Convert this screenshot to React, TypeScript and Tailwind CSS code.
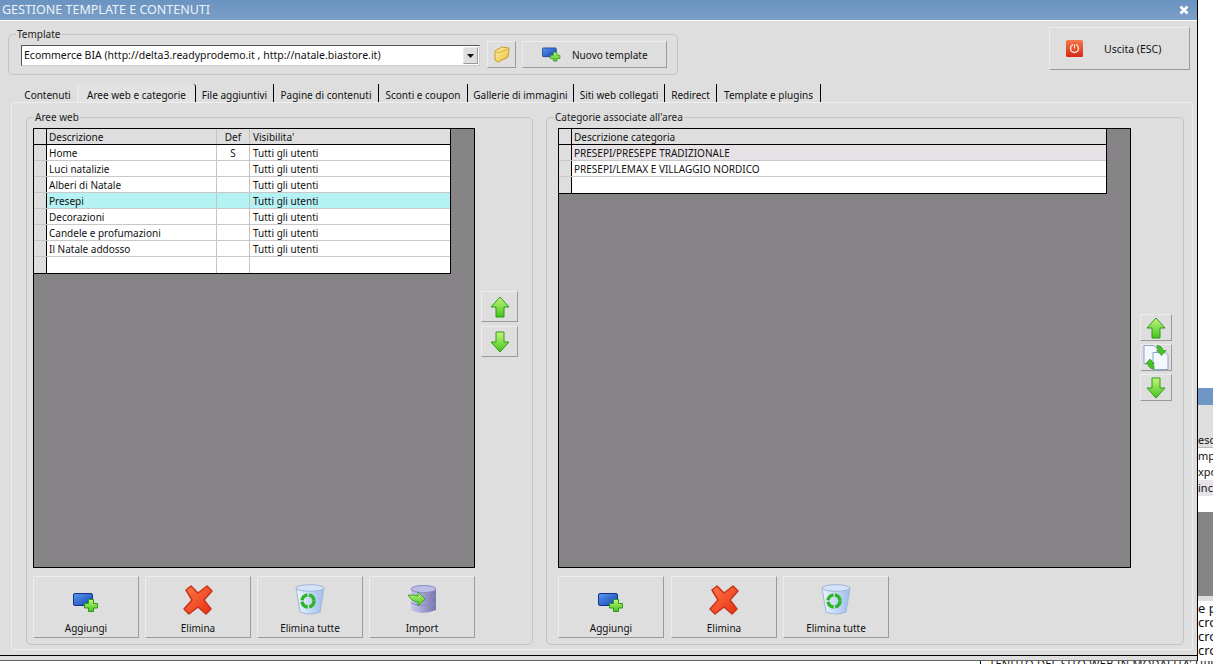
const iconGradients = (
  <defs>
    <linearGradient id="blueRect" x1="0" y1="0" x2="1" y2="1">
      <stop offset="0" stopColor="#5b9bf0" />
      <stop offset="1" stopColor="#1240b0" />
    </linearGradient>
    <linearGradient id="greenFill" x1="0" y1="0" x2="0" y2="1">
      <stop offset="0" stopColor="#c4f57c" />
      <stop offset="1" stopColor="#45c41e" />
    </linearGradient>
    <linearGradient id="redFill" x1="0" y1="0" x2="1" y2="1">
      <stop offset="0" stopColor="#ff7a4a" />
      <stop offset="1" stopColor="#e62e12" />
    </linearGradient>
    <linearGradient id="binFill" x1="0" y1="0" x2="1" y2="0">
      <stop offset="0" stopColor="#eef5ff" />
      <stop offset="1" stopColor="#9dbdea" />
    </linearGradient>
    <linearGradient id="dbFill" x1="0" y1="0" x2="1" y2="0">
      <stop offset="0" stopColor="#c9c9ee" />
      <stop offset="1" stopColor="#7676b0" />
    </linearGradient>
    <linearGradient id="folderFill" x1="0" y1="0" x2="1" y2="1">
      <stop offset="0" stopColor="#fff3a8" />
      <stop offset="1" stopColor="#e8bd3c" />
    </linearGradient>
    <linearGradient id="powerFill" x1="0" y1="0" x2="0" y2="1">
      <stop offset="0" stopColor="#f47a4e" />
      <stop offset="1" stopColor="#d62a14" />
    </linearGradient>
  </defs>
);

function AddIcon({ width = 26, height = 19 }: { width?: number; height?: number }) {
  return (
    <svg width={width} height={height} viewBox="0 0 26 19">
      {iconGradients}
      <rect x="0.5" y="0.5" width="19" height="12" rx="1.5" fill="url(#blueRect)" stroke="#12308c" />
      <path d="M15.5 6.5h5v4h4v4.5h-4v3.5h-5V15h-4v-4.5h4z" fill="url(#greenFill)" stroke="#2d9a18" />
    </svg>
  );
}

function DeleteIcon() {
  return (
    <svg width="30" height="30" viewBox="0 0 30 30">
      {iconGradients}
      <path
        d="M8 1 L15 8 L24 1 L29 6 L21 15 L28 24 L23 29 L15 22 L6 29 L1 24 L9 15 L3 5 Z"
        fill="url(#redFill)"
        stroke="#c8321a"
        strokeWidth="1.5"
        strokeLinejoin="round"
      />
    </svg>
  );
}

function BinIcon() {
  return (
    <svg width="30" height="31" viewBox="0 0 30 31">
      {iconGradients}
      <path d="M1 4 L5 28 Q15 32 25 28 L29 4 Z" fill="url(#binFill)" stroke="#9fb6d8" />
      <ellipse cx="15" cy="4" rx="14" ry="3.3" fill="#d4e3f8" stroke="#9fb6d8" />
      <circle cx="13" cy="17" r="6" fill="none" stroke="#2fb52a" strokeWidth="3.5" strokeDasharray="8 1.5" />
    </svg>
  );
}

function ImportIcon() {
  return (
    <svg width="29" height="29" viewBox="0 0 29 29">
      {iconGradients}
      <path d="M3 4 V25 Q14 31 28 25 V4 Z" fill="url(#dbFill)" />
      <ellipse cx="15.5" cy="4" rx="12.5" ry="3.5" fill="#bdbde8" stroke="#8a8ac0" />
      <path d="M3 11 Q15 16 28 11 M3 18 Q15 23 28 18" fill="none" stroke="#8a8ac0" />
      <path d="M0 10 Q8 10 10 11 V7 L17 14 L10 21 V17 Q4 17 0 10 Z" fill="url(#greenFill)" stroke="#2d9a18" strokeWidth="0.8" />
    </svg>
  );
}

function ArrowIcon({ down }: { down?: boolean }) {
  return (
    <svg width="20" height="22" viewBox="0 0 20 22">
      {iconGradients}
      <path
        d={down ? "M6 1h8v10h5L10 21 1 11h5z" : "M10 1l9 10h-5v10H6V11H1z"}
        fill="url(#greenFill)"
        stroke="#2d9a18"
        strokeLinejoin="round"
      />
    </svg>
  );
}

function SwapIcon() {
  return (
    <svg width="26" height="25" viewBox="0 0 26 25">
      {iconGradients}
      <path d="M1 .5h10l3 3v15H1z" fill="#f4f7fd" stroke="#8da6d0" />
      <path d="M10 7.5h12l3 3v14H10z" fill="#f4f7fd" stroke="#8da6d0" />
      <path d="M14 .5q5 0 6 5h3l-4.500 5L14 5.500h2.500q-.5-2-2.500-2z" fill="#46c425" stroke="#1e8c16" strokeWidth=".6" />
      <path d="M11 24q-5 0-6-5H2.500l4.500-5 4.500 5H9q.5 2 2 2z" fill="#46c425" stroke="#1e8c16" strokeWidth=".6" />
    </svg>
  );
}

function FolderIcon() {
  return (
    <svg width="16" height="17" viewBox="0 0 16 17">
      {iconGradients}
      <path d="M1 5 L8 1 L15 2 L14 11 L4 16 L1 14 Z" fill="url(#folderFill)" stroke="#c89a2a" strokeLinejoin="round" />
      <path d="M1 5 L4 7 L14 3" fill="none" stroke="#d9ad3a" />
    </svg>
  );
}

function PowerIcon() {
  return (
    <svg width="17" height="17" viewBox="0 0 17 17">
      {iconGradients}
      <rect width="17" height="17" rx="1.5" fill="url(#powerFill)" />
      <circle cx="8.5" cy="8.5" r="4" fill="none" stroke="#ffe3cf" strokeWidth="1.5" />
      <path d="M8.5 3.500v5" stroke="#e0441f" strokeWidth="3" />
      <path d="M8.5 4v4.500" stroke="#ffe3cf" strokeWidth="1.4" />
    </svg>
  );
}

function ChevronDown() {
  return (
    <svg width="7" height="4" viewBox="0 0 7 4">
      <path d="M0 0h7L3.500 4z" fill="#111" />
    </svg>
  );
}

const raised = "bg-[#dedede] border border-t-[#ececec] border-l-[#ececec] border-r-[#9a9a9a] border-b-[#9a9a9a]";

function BigButton({ label, icon, className = "" }: { label: string; icon: React.ReactNode; className?: string }) {
  return (
    <button className={`${raised} flex h-[62px] w-[106px] flex-col items-center ${className}`}>
      <span className="flex h-[45px] items-center justify-center">{icon}</span>
      <span className="leading-[13px]">{label}</span>
    </button>
  );
}

function ArrowButton({ children, className }: { children: React.ReactNode; className: string }) {
  return <button className={`${raised} flex items-center justify-center ${className}`}>{children}</button>;
}

function Fieldset({ label, className, children }: { label: string; className: string; children: React.ReactNode }) {
  return (
    <div className={`relative rounded-[5px] border border-[#c4c4c4] ${className}`}>
      <span className="absolute -top-[7px] left-[7px] bg-[#dedede] px-[1px] leading-[13px] text-[#222]">{label}</span>
      {children}
    </div>
  );
}

const areas = [
  { name: "Home", def: "S" },
  { name: "Luci natalizie", def: "" },
  { name: "Alberi di Natale", def: "" },
  { name: "Presepi", def: "", selected: true },
  { name: "Decorazioni", def: "" },
  { name: "Candele e profumazioni", def: "" },
  { name: "Il Natale addosso", def: "" },
  { name: "", def: "" },
];

const categories = ["PRESEPI/PRESEPE TRADIZIONALE", "PRESEPI/LEMAX E VILLAGGIO NORDICO", ""];

const tabs = [
  { label: "Contenuti", w: "w-[59px]" },
  { label: "Aree web e categorie", w: "w-[119px]", active: true },
  { label: "File aggiuntivi", w: "w-[78px]" },
  { label: "Pagine di contenuti", w: "w-[105px]" },
  { label: "Sconti e coupon", w: "w-[89px]" },
  { label: "Gallerie di immagini", w: "w-[106px]" },
  { label: "Siti web collegati", w: "w-[91px]" },
  { label: "Redirect", w: "w-[52px]" },
  { label: "Template e plugins", w: "w-[104px]" },
];

function AreasGrid() {
  return (
    <div className="h-[440px] w-[442px] border border-black bg-[#868487]">
      <div className="w-[417px] border-r border-b border-black">
        <div className="flex h-[16px] border-b border-black bg-[#dedede] leading-[16px]">
          <div className="w-[13px] border-r border-black" />
          <div className="w-[170px] border-r border-[#c4c4c4] pl-[2px]">Descrizione</div>
          <div className="w-[33px] border-r border-[#c4c4c4] text-center">Def</div>
          <div className="flex-1 pl-[3px]">Visibilita'</div>
        </div>
        {areas.map((row, i) => (
          <div key={i} className="flex h-[16px] border-b border-[#c8c8c8] bg-white leading-[16px] last:border-b-0">
            <div className="w-[13px] border-r border-black bg-[#dedede]" />
            <div className={`w-[170px] border-r border-[#c4c4c4] pl-[2px] ${row.selected ? "bg-[#b4f2f4]" : ""}`}>{row.name}</div>
            <div className={`w-[33px] border-r border-[#c4c4c4] text-center ${row.selected ? "bg-[#b4f2f4]" : ""}`}>{row.def}</div>
            <div className={`flex-1 pl-[3px] ${row.selected ? "bg-[#b4f2f4]" : ""}`}>{row.name ? "Tutti gli utenti" : ""}</div>
          </div>
        ))}
      </div>
    </div>
  );
}

function CategoriesGrid() {
  return (
    <div className="h-[440px] w-[573px] border border-black bg-[#868487]">
      <div className="w-[548px] border-r border-b border-black">
        <div className="flex h-[16px] border-b border-black bg-[#dedede] leading-[16px]">
          <div className="w-[13px] border-r border-black" />
          <div className="flex-1 pl-[2px]">Descrizione categoria</div>
        </div>
        {categories.map((name, i) => (
          <div key={i} className="flex h-[16px] border-b border-[#c8c8c8] leading-[16px] last:border-b-0">
            <div className="w-[13px] border-r border-black bg-[#dedede]" />
            <div className={`flex-1 pl-[2px] ${i === 0 ? "bg-[#e6e2e6]" : "bg-white"}`}>{name}</div>
          </div>
        ))}
      </div>
    </div>
  );
}

function BackdropStrip() {
  return (
    <div className="flex h-full flex-1 flex-col overflow-hidden whitespace-nowrap bg-white text-[13px] leading-[14px] text-[#111]">
      <div className="h-[388px] shrink-0" />
      <div className="h-[17px] shrink-0 bg-[#6f97c6]" />
      <div className="h-[27px] shrink-0 bg-[#dedede]" />
      <div className="h-[16px] shrink-0 border-b border-[#bbb] bg-[#dedede] text-[11px] leading-[15px]">esc</div>
      <div className="h-[16px] shrink-0 text-[11px] leading-[15px]">mpo</div>
      <div className="h-[16px] shrink-0 text-[11px] leading-[15px]">xpo</div>
      <div className="h-[16px] shrink-0 bg-[#e6e2e6] text-[11px] leading-[15px]">incr</div>
      <div className="h-[16px] shrink-0" />
      <div className="h-[84px] shrink-0 bg-[#868487]" />
      <div className="h-[5px] shrink-0 bg-[#dedede]" />
      <div className="h-[14px] shrink-0">e p</div>
      <div className="h-[14px] shrink-0">cro</div>
      <div className="h-[14px] shrink-0">cro</div>
      <div className="h-[14px] shrink-0">cro</div>
    </div>
  );
}

export default function App() {
  return (
    <div className="flex h-[664px] w-[1213px] flex-col overflow-hidden bg-white font-['Noto_Sans',sans-serif] text-[10px] text-[#111]">
      <div className="flex h-[661px]">
        {/* main window */}
        <div className="flex h-full w-[1198px] flex-col border-r border-black bg-[#dedede]">
          <div className="flex h-[21px] items-center justify-between border-b border-white bg-gradient-to-b from-[#6a93c0] to-[#7a9fc8] pr-[8px] pl-[2px]">
            <span className="text-[12.500px] text-[#eef2f8]">GESTIONE TEMPLATE E CONTENUTI</span>
            <svg width="10" height="10" viewBox="0 0 10 10">
              <path d="M1.500 1.500l7 7m0-7l-7 7" stroke="#fff" strokeWidth="2.500" />
            </svg>
          </div>

          <div className="flex justify-between pt-[6px] pr-[7px] pl-[8px]">
            <Fieldset label="Template" className="mt-[7px] flex h-[41px] w-[670px] items-center">
              <div className="mt-[2px] ml-[12px] flex h-[21px] w-[459px] items-center justify-between border border-t-[#555] border-r-[#ccc] border-b-[#ccc] border-l-[#555] bg-white pr-[1px] pl-[2px] text-[10.500px] whitespace-nowrap">
                <span>Ecommerce BIA (http://delta3.readyprodemo.it , http://natale.biastore.it)</span>
                <span className={`${raised} flex h-[17px] w-[15px] items-center justify-center border-[#777]`}>
                  <ChevronDown />
                </span>
              </div>
              <button className={`${raised} ml-[7px] flex h-[27px] w-[29px] items-center justify-center`}>
                <FolderIcon />
              </button>
              <button className={`${raised} ml-[6px] flex h-[27px] w-[145px] items-center pl-[19px]`}>
                <AddIcon width={19} height={15} />
                <span className="mt-[2px] ml-[11px]">Nuovo template</span>
              </button>
            </Fieldset>
            <button className={`${raised} flex h-[43px] w-[141px] items-center pl-[16px]`}>
              <PowerIcon />
              <span className="mt-[3px] ml-[21px] text-[10.500px]">Uscita (ESC)</span>
            </button>
          </div>

          <div className="mt-[9px] flex h-[18px] pl-[18px]">
            {tabs.map((tab) => (
              <div
                key={tab.label}
                className={`${tab.w} flex items-center justify-center pt-[4px] whitespace-nowrap ${tab.label === "Contenuti" ? "" : "border-r border-black"} ${tab.active ? "rounded-t-[3px] border-l border-l-[#eee] bg-[#e2e2e2]" : ""}`}
              >
                {tab.label}
              </div>
            ))}
          </div>

          <div className="mx-[11px] flex h-[548px] w-[1182px] gap-[13px] rounded-[2px] border border-[#eeeeee] pt-[14px] pl-[14px]">
            <Fieldset label="Aree web" className="h-[528px] w-[507px] pt-[10px] pl-[6px]">
              <div className="flex">
                <AreasGrid />
                <div className="mt-[163px] ml-[6px] flex flex-col gap-[4px]">
                  <ArrowButton className="h-[31px] w-[37px]"><ArrowIcon /></ArrowButton>
                  <ArrowButton className="h-[31px] w-[37px]"><ArrowIcon down /></ArrowButton>
                </div>
              </div>
              <div className="mt-[8px] flex gap-[6px]">
                <BigButton label="Aggiungi" icon={<span className="mt-[5px] block"><AddIcon /></span>} />
                <BigButton label="Elimina" icon={<DeleteIcon />} />
                <BigButton label="Elimina tutte" icon={<BinIcon />} />
                <BigButton label="Import" icon={<ImportIcon />} />
              </div>
            </Fieldset>

            <Fieldset label="Categorie associate all'area" className="h-[528px] w-[638px] pt-[10px] pl-[11px]">
              <div className="flex">
                <CategoriesGrid />
                <div className="mt-[186px] ml-[9px] flex flex-col gap-[3px]">
                  <ArrowButton className="h-[27px] w-[32px]"><ArrowIcon /></ArrowButton>
                  <ArrowButton className="h-[27px] w-[32px]"><SwapIcon /></ArrowButton>
                  <ArrowButton className="h-[27px] w-[32px]"><ArrowIcon down /></ArrowButton>
                </div>
              </div>
              <div className="mt-[8px] flex gap-[6px]">
                <BigButton label="Aggiungi" icon={<span className="mt-[5px] block"><AddIcon /></span>} />
                <BigButton label="Elimina" icon={<DeleteIcon />} className="ml-[1px]" />
                <BigButton label="Elimina tutte" icon={<BinIcon />} />
              </div>
            </Fieldset>
          </div>

          <div className="mt-[4px] h-[2px] border-b border-black" />
          <div className="flex-1 border-b border-[#666]" />
        </div>
        <BackdropStrip />
      </div>
      <div className="flex flex-1 overflow-hidden whitespace-nowrap pl-[980px] text-[11px] leading-[6px] tracking-wide">
        <span className="border-l border-black pl-[8px]">TENUTO DEL SITO WEB IN MODALITA' UPPERCASE</span>
      </div>
    </div>
  );
}
